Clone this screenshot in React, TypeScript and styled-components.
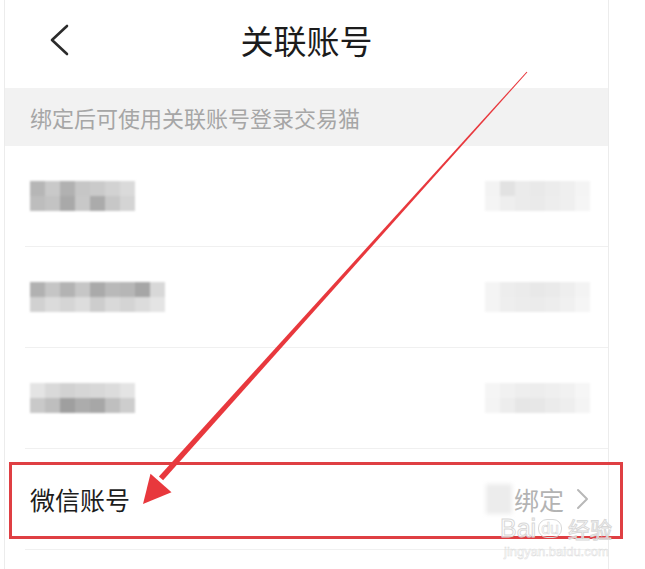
import React from "react";
import styled, { createGlobalStyle } from "styled-components";

const GlobalStyle = createGlobalStyle`
  html, body {
    margin: 0;
    padding: 0;
    background: #ffffff;
  }
  body {
    font-family: "Noto Sans CJK SC", "Noto Sans", sans-serif;
  }
`;

type TMosaic = {
  top: string[];
  bottom: string[];
  cell: number;
};

const LEFT_MOSAICS: TMosaic[] = [
  {
    cell: 15,
    top: ["#b6b6b6", "#c9c9c9", "#b1b1b1", "#c6c6c6", "#cacaca", "#d2d2d2", "#dadada"],
    bottom: ["#bdbdbd", "#c3c3c3", "#a9a9a9", "#c8c8c8", "#ababab", "#c7c7c7", "#d4d4d4"],
  },
  {
    cell: 15,
    top: ["#b1b1b1", "#c5c5c5", "#b3b3b3", "#c6c6c6", "#aaaaaa", "#b9b9b9", "#b6b6b6", "#a6a6a6", "#d8d8d8"],
    bottom: ["#d1d1d1", "#dbdbdb", "#d5d5d5", "#dddddd", "#cdcdcd", "#d9d9d9", "#d4d4d4", "#dcdcdc", "#e4e4e4"],
  },
  {
    cell: 15,
    top: ["#e4e4e4", "#d9d9d9", "#d2d2d2", "#d6d6d6", "#d8d8d8", "#dcdcdc", "#e4e4e4"],
    bottom: ["#c9c9c9", "#bebebe", "#9f9f9f", "#acacac", "#a7a7a7", "#bfbfbf", "#cdcdcd"],
  },
];

const RIGHT_MOSAICS: TMosaic[] = [
  {
    cell: 15,
    top: ["#f3f3f3", "#e2e2e2", "#ebebeb", "#e9e9e9", "#ececec", "#efefef", "#f4f4f4"],
    bottom: ["#f4f4f4", "#eeeeee", "#ebebeb", "#eaeaea", "#ededed", "#efefef", "#f5f5f5"],
  },
  {
    cell: 15,
    top: ["#f4f4f4", "#ededed", "#ebebeb", "#e8e8e8", "#eaeaea", "#eeeeee", "#f3f3f3"],
    bottom: ["#f4f4f4", "#eeeeee", "#ececec", "#ebebeb", "#ededed", "#f0f0f0", "#f5f5f5"],
  },
  {
    cell: 15,
    top: ["#f5f5f5", "#f1f1f1", "#eeeeee", "#ededed", "#efefef", "#f1f1f1", "#f6f6f6"],
    bottom: ["#f4f4f4", "#ededed", "#e6e6e6", "#e7e7e7", "#ebebeb", "#eeeeee", "#f4f4f4"],
  },
];

function Mosaic({ data }: { data: TMosaic }) {
  return (
    <MosaicGrid $cols={data.top.length} $cell={data.cell}>
      {[...data.top, ...data.bottom].map((c, i) => (
        <MosaicCell key={i} $color={c} />
      ))}
    </MosaicGrid>
  );
}

export default function App() {
  return (
    <>
      <GlobalStyle />
      <Screen>
        <Panel>
          <Header>
            <BackBtn type="button" aria-label="back">
              <svg width="20" height="32" viewBox="0 0 20 32">
                <polyline
                  points="17,2 2,16 17,30"
                  fill="none"
                  stroke="#2b2b2b"
                  strokeWidth="2.6"
                  strokeLinecap="round"
                  strokeLinejoin="round"
                />
              </svg>
            </BackBtn>
            <Title>关联账号</Title>
            <span />
          </Header>

          <Notice>绑定后可使用关联账号登录交易猫</Notice>

          {LEFT_MOSAICS.map((m, i) => (
            <Row key={i}>
              <Mosaic data={m} />
              <RowRight>
                <Mosaic data={RIGHT_MOSAICS[i]} />
              </RowRight>
            </Row>
          ))}

          <Row>
            <Label>微信账号</Label>
            <RowRight>
              <Smudge />
              <Action>绑定</Action>
              <svg width="14" height="22" viewBox="0 0 14 22">
                <polyline
                  points="2,2 11,11 2,20"
                  fill="none"
                  stroke="#b8b8b8"
                  strokeWidth="2"
                  strokeLinecap="round"
                  strokeLinejoin="round"
                />
              </svg>
            </RowRight>
          </Row>
        </Panel>

        <HighlightBox />

        <Watermark>
          <Brand>
            Bai<Paw>du</Paw>
            <BrandCn>经验</BrandCn>
          </Brand>
          <Domain>jingyan.baidu.com</Domain>
        </Watermark>

        <ArrowLayer width="645" height="569" viewBox="0 0 645 569">
          <polygon points="527.4,72.3 526.6,71.7 158.9,476.5 163.1,480.3" fill="#e8383d" />
          <polygon points="143,504 150.5,473.7 171.5,492.3" fill="#e8383d" />
        </ArrowLayer>
      </Screen>
    </>
  );
}

const Screen = styled.div`
  position: relative;
  width: 645px;
  height: 569px;
  overflow: hidden;
  background: #ffffff;
`;

const Panel = styled.div`
  margin-left: 4px;
  width: 605px;
  height: 100%;
  box-sizing: border-box;
  border-left: 1px solid #ececec;
  border-right: 1px solid #ececec;
  display: flex;
  flex-direction: column;
`;

const Header = styled.div`
  height: 88px;
  padding-bottom: 8px;
  box-sizing: border-box;
  display: grid;
  grid-template-columns: 1fr auto 1fr;
  align-items: center;
`;

const BackBtn = styled.button`
  justify-self: start;
  margin-left: 45px;
  padding: 0;
  border: none;
  background: none;
  display: flex;
  cursor: pointer;
`;

const Title = styled.h1`
  margin: 0;
  font-size: 33px;
  font-weight: 400;
  color: #1c1c1c;
  letter-spacing: 0;
`;

const Notice = styled.p`
  margin: 0;
  height: 58px;
  display: flex;
  align-items: center;
  padding-left: 25px;
  background-color: #f2f2f2;
  font-size: 22px;
  color: #a6a6a6;
`;

const Row = styled.div`
  height: 101px;
  flex-shrink: 0;
  box-sizing: border-box;
  margin-left: 20px;
  padding: 0 18px 0 5px;
  border-bottom: 1px solid #f0f0f0;
  display: flex;
  align-items: center;
  justify-content: space-between;
`;

const RowRight = styled.div`
  display: flex;
  align-items: center;
  gap: 6px;
`;

const MosaicGrid = styled.div<{ $cols: number; $cell: number }>`
  display: grid;
  grid-template-columns: repeat(${(p) => p.$cols}, ${(p) => p.$cell}px);
  grid-auto-rows: ${(p) => p.$cell}px;
  filter: blur(0.8px);
`;

const MosaicCell = styled.span<{ $color: string }>`
  background-color: ${(p) => p.$color};
`;

const Label = styled.span`
  font-size: 25px;
  line-height: 30px;
  color: #1c1c1c;
`;

const Smudge = styled.span`
  width: 26px;
  height: 30px;
  background: #ececec;
  filter: blur(2px);
  margin-right: -4px;
`;

const Action = styled.span`
  font-size: 25px;
  line-height: 30px;
  color: #b3b3b3;
  margin-right: 6px;
`;

const HighlightBox = styled.div`
  position: absolute;
  left: 9px;
  top: 462px;
  width: 614px;
  height: 77px;
  box-sizing: border-box;
  border: 3px solid #df3f43;
  pointer-events: none;
`;

const Watermark = styled.div`
  position: absolute;
  left: 500px;
  top: 516px;
  display: flex;
  flex-direction: column;
  align-items: flex-start;
  gap: 5px;
  pointer-events: none;
  color: rgba(255, 255, 255, 0.6);
`;

const Brand = styled.div`
  display: flex;
  align-items: center;
  height: 24px;
  font-family: "Liberation Sans", Arial, sans-serif;
  font-size: 25px;
  line-height: 24px;
  -webkit-text-stroke: 1px #d8d8d8;
`;

const Paw = styled.span`
  font-size: 16px;
  line-height: 17px;
  margin: 0 4px 0 2px;
  padding: 0 2px;
  border: 1px solid #d8d8d8;
  border-radius: 9px;
  -webkit-text-stroke: 0.6px #d8d8d8;
`;

const BrandCn = styled.span`
  font-family: "Noto Sans CJK SC", sans-serif;
  font-size: 22px;
  line-height: 24px;
  margin-left: 2px;
`;

const Domain = styled.span`
  font-family: "Liberation Sans", Arial, sans-serif;
  font-size: 13px;
  line-height: 14px;
  margin-left: 4px;
  -webkit-text-stroke: 0.5px #dcdcdc;
`;

const ArrowLayer = styled.svg`
  position: absolute;
  left: 0;
  top: 0;
  pointer-events: none;
`;
